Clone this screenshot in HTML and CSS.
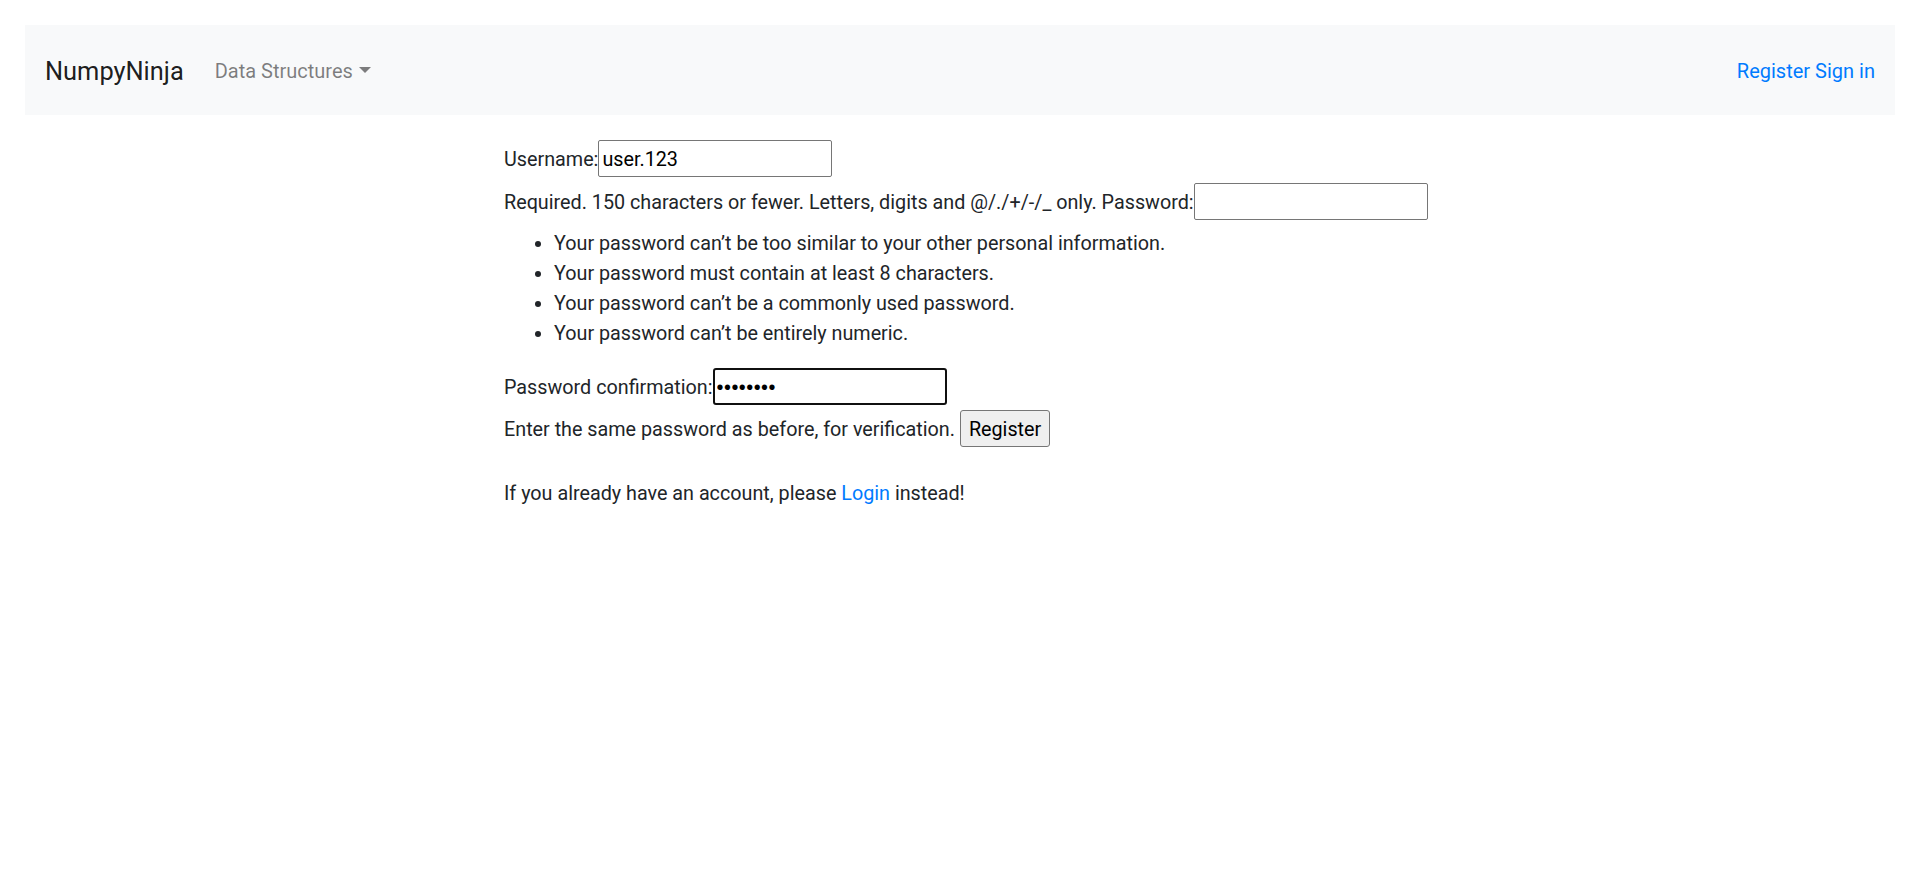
FILE: index.html
```html
<!DOCTYPE html>
<html lang="en">
<head>
<meta charset="utf-8">
<title>Register</title>
<link rel="stylesheet" href="styles.css">
</head>
<body>
<nav class="navbar">
  <div class="nav-left">
    <a class="brand" href="#">NumpyNinja</a>
    <a class="nav-link dropdown-toggle" href="#">Data Structures</a>
  </div>
  <div class="nav-right">
    <a class="nav-link-blue" href="#">Register</a>
    <a class="nav-link-blue" href="#">Sign in</a>
  </div>
</nav>
<main class="page">
  <form class="reg-form">
    <div class="row row-gap">
      <label for="u">Username:</label><input id="u" class="field" type="text" value="user.123">
    </div>
    <div class="row row-gap2">
      <span class="helptext">Required. 150 characters or fewer. Letters, digits and @/./+/-/_ only.</span>&nbsp;<label for="p1">Password:</label><input id="p1" class="field" type="password">
    </div>
    <ul class="rules">
      <li>Your password can’t be too similar to your other personal information.</li>
      <li>Your password must contain at least 8 characters.</li>
      <li>Your password can’t be a commonly used password.</li>
      <li>Your password can’t be entirely numeric.</li>
    </ul>
    <div class="row row-gap3">
      <label for="p2">Password confirmation:</label><input id="p2" class="field focused" type="password" value="abcdefgh">
    </div>
    <div class="row">
      <span class="helptext">Enter the same password as before, for verification.</span>&nbsp;<button type="button" class="btn">Register</button>
    </div>
  </form>
  <p class="login-note">If you already have an account, please <a href="#" class="link">Login</a> instead!</p>
</main>
</body>
</html>
```
FILE: styles.css
```css
html, body {
  margin: 0;
  padding: 0;
}
body {
  font-family: "Roboto", "Liberation Sans", sans-serif;
  font-size: 20px;
  line-height: 30px;
  color: #212529;
  background: #fff;
}
a { text-decoration: none; }

.navbar {
  margin: 25px 25px 0;
  height: 90px;
  box-sizing: border-box;
  padding: 2px 20px 0;
  background: #f8f9fa;
  display: flex;
  align-items: center;
  justify-content: space-between;
}
.nav-left {
  display: flex;
  align-items: center;
}
.brand {
  font-size: 25.4px;
  line-height: 38px;
  color: rgba(0,0,0,.9);
  margin-right: 31px;
}
.nav-link {
  color: rgba(0,0,0,.5);
}
.dropdown-toggle::after {
  content: "";
  display: inline-block;
  margin-left: 6px;
  vertical-align: 5px;
  border-top: 6px solid;
  border-right: 6px solid transparent;
  border-left: 6px solid transparent;
}
.nav-right {
  display: flex;
  gap: 5px;
}
.nav-link-blue { color: #007bff; }

.page {
  width: 936px;
  margin: 25px auto 0;
  padding-left: 24px;
  font-size: 19.75px;
}
.row {
  display: flex;
  align-items: baseline;
  white-space: nowrap;
}
.row-gap { margin-bottom: 6px; }
.row-gap2 { margin-bottom: 9px; }
.row-gap3 { margin-bottom: 5px; }
.field {
  font: inherit;
  line-height: 30px;
  height: 37px;
  width: 234px;
  box-sizing: border-box;
  padding: 2px 3px 0;
  border: 1px solid #767676;
  border-radius: 2px;
  color: #000;
  background: #fff;
  outline: none;
}
.focused {
  border: 2px solid #101010;
  border-radius: 3px;
  padding: 1px 2px 0;
  font-family: "Liberation Sans", sans-serif;
  letter-spacing: 0.5px;
}
.rules {
  margin: 0 0 19px;
  padding-left: 50px;
}
.btn {
  font: inherit;
  line-height: 30px;
  height: 37px;
  padding: 2px 8px 0;
  color: #000;
  background: #efefef;
  border: 1px solid #767676;
  border-radius: 3px;
}
.login-note {
  margin: 32px 0 20px;
}
.link { color: #007bff; }
```
